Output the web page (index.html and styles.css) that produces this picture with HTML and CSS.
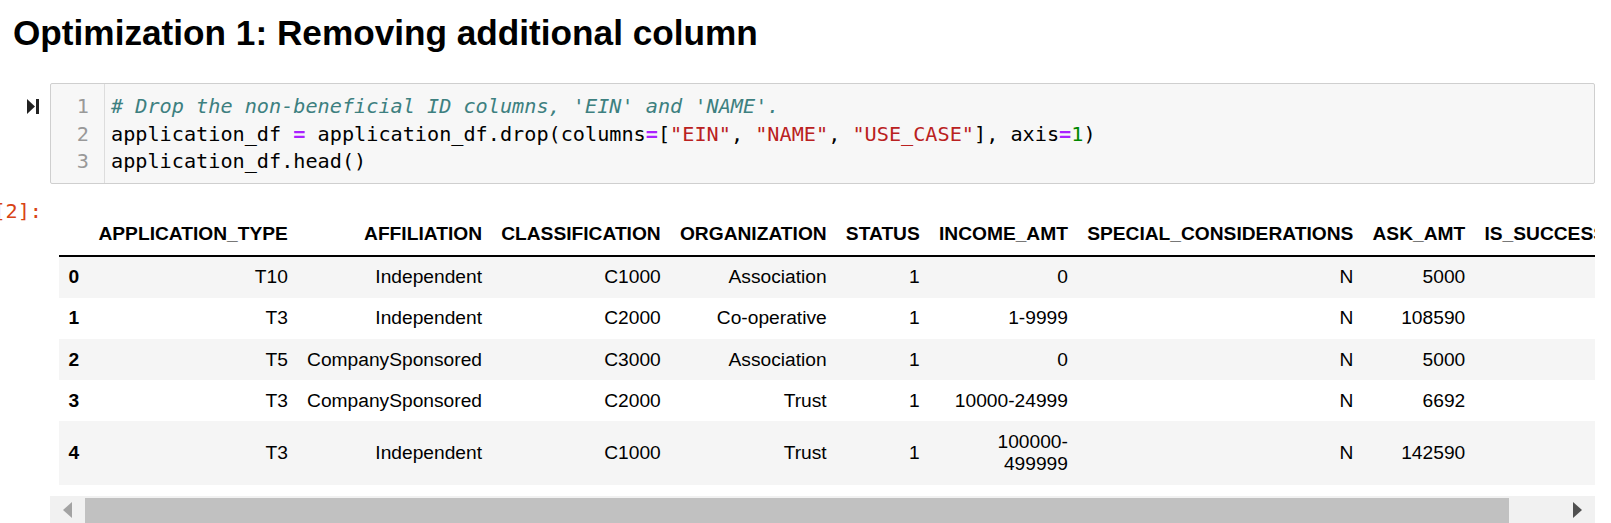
FILE: index.html
```html
<!DOCTYPE html>
<html>
<head>
<meta charset="utf-8">
<link rel="stylesheet" href="styles.css">
</head>
<body>
<div class="nb">
  <h2 class="title">Optimization 1: Removing additional column</h2>

  <div class="cell code-cell">
    <div class="prompt in-prompt">
      <svg class="run" width="12" height="15" viewBox="0 0 12 15"><path d="M0 0 L8 7.5 L0 15 Z" fill="#222"/><rect x="9" y="0" width="3" height="15" fill="#222"/></svg>
    </div>
    <div class="input">
      <div class="gutter"><div>1</div><div>2</div><div>3</div></div>
      <pre class="code"><span class="cm"># Drop the non-beneficial ID columns, 'EIN' and 'NAME'.</span>
application_df <span class="op">=</span> application_df.drop(columns<span class="op">=</span>[<span class="st">"EIN"</span>, <span class="st">"NAME"</span>, <span class="st">"USE_CASE"</span>], axis<span class="op">=</span><span class="nu">1</span>)
application_df.head()</pre>
    </div>
  </div>

  <div class="cell out-cell">
    <div class="prompt out-prompt"><span>Out[2]:</span></div>
    <div class="output">
      <div class="scroll">
        <table class="df">
          <thead>
            <tr><th></th><th>APPLICATION_TYPE</th><th>AFFILIATION</th><th>CLASSIFICATION</th><th>ORGANIZATION</th><th>STATUS</th><th>INCOME_AMT</th><th>SPECIAL_CONSIDERATIONS</th><th>ASK_AMT</th><th>IS_SUCCESSFUL</th></tr>
          </thead>
          <tbody>
            <tr><th>0</th><td>T10</td><td>Independent</td><td>C1000</td><td>Association</td><td>1</td><td>0</td><td>N</td><td>5000</td><td>1</td></tr>
            <tr><th>1</th><td>T3</td><td>Independent</td><td>C2000</td><td>Co-operative</td><td>1</td><td>1-9999</td><td>N</td><td>108590</td><td>1</td></tr>
            <tr><th>2</th><td>T5</td><td>CompanySponsored</td><td>C3000</td><td>Association</td><td>1</td><td>0</td><td>N</td><td>5000</td><td>0</td></tr>
            <tr><th>3</th><td>T3</td><td>CompanySponsored</td><td>C2000</td><td>Trust</td><td>1</td><td>10000-24999</td><td>N</td><td>6692</td><td>1</td></tr>
            <tr><th>4</th><td>T3</td><td>Independent</td><td>C1000</td><td>Trust</td><td>1</td><td>100000-499999</td><td>N</td><td>142590</td><td>1</td></tr>
          </tbody>
        </table>
      </div>
      <div class="hbar">
        <div class="sb-btn"><span class="arr-left"></span></div>
        <div class="sb-thumb"></div>
        <div class="sb-rest"></div>
        <div class="sb-btn"><span class="arr-right"></span></div>
      </div>
    </div>
  </div>
</div>
</body>
</html>
```

FILE: styles.css
```css
html, body {
  margin: 0;
  padding: 0;
  background: #fff;
  overflow: hidden;
}

.nb {
  width: 1611px;
}

.title {
  font-family: "Liberation Sans", Arial, sans-serif;
  font-weight: bold;
  font-size: 35.2px;
  line-height: 40px;
  color: #000;
  margin: 13px 0 0 13px;
}

.cell {
  display: flex;
  margin-right: 16px;
}

.code-cell {
  margin-top: 30px;
}

.prompt {
  width: 50px;
  flex: none;
}

.in-prompt .run {
  display: block;
  margin: 16px 0 0 27px;
}

.input {
  flex: 1;
  display: flex;
  background: #f7f7f7;
  border: 1px solid #cfcfcf;
  border-radius: 2px;
}

.gutter {
  width: 54px;
  box-sizing: border-box;
  border-right: 1px solid #ddd;
  padding: 9px 15px 7px 0;
  text-align: right;
  color: #999;
  font-family: "DejaVu Sans Mono", "Liberation Mono", monospace;
  font-size: 20.2px;
  line-height: 27.5px;
}

.code {
  margin: 0;
  padding: 9px 0 7px 6px;
  font-family: "DejaVu Sans Mono", "Liberation Mono", monospace;
  font-size: 20.2px;
  line-height: 27.5px;
  color: #000;
}

.cm { color: #3d8080; font-style: italic; }
.op { color: #aa22ff; font-weight: bold; }
.st { color: #ba2121; }
.nu { color: #008800; }

.out-cell {
  margin-top: 15px;
}

.out-prompt {
  display: flex;
  justify-content: flex-end;
  box-sizing: border-box;
  padding-right: 8px;
  font-family: "DejaVu Sans Mono", "Liberation Mono", monospace;
  font-size: 20.2px;
  line-height: 24px;
  color: #d84315;
  white-space: nowrap;
}

.out-prompt span {
  flex: none;
}

.output {
  flex: 1;
  min-width: 0;
}

.scroll {
  overflow: hidden;
  padding: 15px 0 11px 9px;
}

.df {
  border-collapse: collapse;
  border-spacing: 0;
  font-family: "Liberation Sans", Arial, sans-serif;
  font-size: 19.2px;
  color: #000;
}

.df th, .df td {
  padding: 0.5em;
  text-align: right;
  vertical-align: middle;
  line-height: normal;
  white-space: normal;
}

.df th {
  font-weight: bold;
}

.df thead th {
  border-bottom: 2px solid #000;
}

.df tbody tr:nth-child(odd) {
  background: #f5f5f5;
}

.hbar {
  height: 29px;
  background: #f1f1f1;
  display: flex;
}

.sb-btn {
  width: 35px;
  flex: none;
  display: flex;
  align-items: center;
  justify-content: center;
}

.sb-thumb {
  width: 1424px;
  flex: none;
  margin-top: 2px;
  background: #c1c1c1;
}

.sb-rest {
  flex: 1;
}

.arr-left {
  width: 0;
  height: 0;
  border-top: 8px solid transparent;
  border-bottom: 8px solid transparent;
  border-right: 9px solid #a3a3a3;
}

.arr-right {
  width: 0;
  height: 0;
  border-top: 8px solid transparent;
  border-bottom: 8px solid transparent;
  border-left: 9px solid #505050;
}
```
